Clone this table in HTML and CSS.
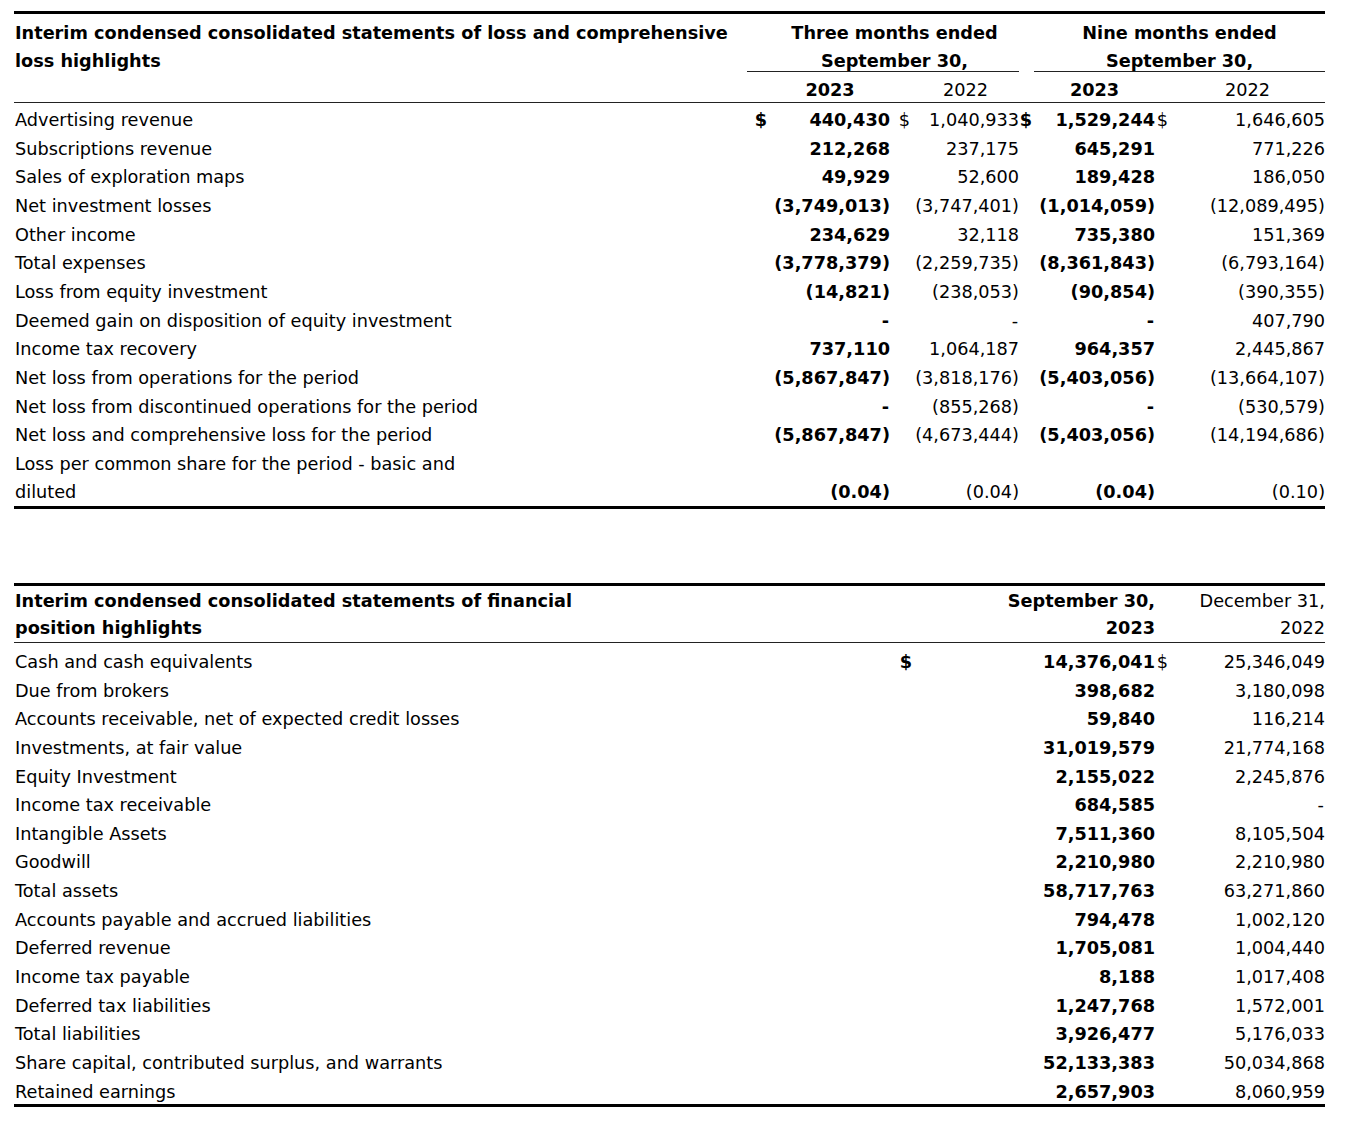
FILE: index.html
```html
<!DOCTYPE html>
<html>
<head>
<meta charset="utf-8">
<title>Highlights</title>
<link rel="stylesheet" href="styles.css">
</head>
<body>
<table class="fin loss">
  <colgroup>
    <col class="l-label"><col class="l-cur1"><col class="l-v1"><col class="l-cur2"><col class="l-v2"><col class="l-cur3"><col class="l-v3"><col class="l-cur4"><col class="l-v4">
  </colgroup>
  <thead>
    <tr class="h1">
      <th rowspan="3" class="title">Interim condensed consolidated statements of loss and comprehensive<br>loss highlights</th>
      <th colspan="4" class="period three">Three months ended</th>
      <th></th>
      <th colspan="3" class="period">Nine months ended</th>
    </tr>
    <tr class="h2">
      <th colspan="4" class="period three under">September 30,</th>
      <th></th>
      <th colspan="3" class="period under">September 30,</th>
    </tr>
    <tr class="h3">
      <th></th>
      <th class="year b">2023</th>
      <th></th>
      <th class="year">2022</th>
      <th></th>
      <th class="year b">2023</th>
      <th></th>
      <th class="year">2022</th>
    </tr>
  </thead>
  <tbody>
    <tr class="first"><td class="lbl">Advertising revenue</td><td class="cur b">$</td><td class="num b">440,430</td><td class="cur">$</td><td class="num">1,040,933</td><td class="cur b">$</td><td class="num b">1,529,244</td><td class="cur">$</td><td class="num">1,646,605</td></tr>
    <tr><td class="lbl">Subscriptions revenue</td><td></td><td class="num b">212,268</td><td></td><td class="num">237,175</td><td></td><td class="num b">645,291</td><td></td><td class="num">771,226</td></tr>
    <tr><td class="lbl">Sales of exploration maps</td><td></td><td class="num b">49,929</td><td></td><td class="num">52,600</td><td></td><td class="num b">189,428</td><td></td><td class="num">186,050</td></tr>
    <tr><td class="lbl">Net investment losses</td><td></td><td class="num b">(3,749,013)</td><td></td><td class="num">(3,747,401)</td><td></td><td class="num b">(1,014,059)</td><td></td><td class="num">(12,089,495)</td></tr>
    <tr><td class="lbl">Other income</td><td></td><td class="num b">234,629</td><td></td><td class="num">32,118</td><td></td><td class="num b">735,380</td><td></td><td class="num">151,369</td></tr>
    <tr><td class="lbl">Total expenses</td><td></td><td class="num b">(3,778,379)</td><td></td><td class="num">(2,259,735)</td><td></td><td class="num b">(8,361,843)</td><td></td><td class="num">(6,793,164)</td></tr>
    <tr><td class="lbl">Loss from equity investment</td><td></td><td class="num b">(14,821)</td><td></td><td class="num">(238,053)</td><td></td><td class="num b">(90,854)</td><td></td><td class="num">(390,355)</td></tr>
    <tr><td class="lbl">Deemed gain on disposition of equity investment</td><td></td><td class="num b dash">-</td><td></td><td class="num dash">-</td><td></td><td class="num b dash">-</td><td></td><td class="num">407,790</td></tr>
    <tr><td class="lbl">Income tax recovery</td><td></td><td class="num b">737,110</td><td></td><td class="num">1,064,187</td><td></td><td class="num b">964,357</td><td></td><td class="num">2,445,867</td></tr>
    <tr><td class="lbl">Net loss from operations for the period</td><td></td><td class="num b">(5,867,847)</td><td></td><td class="num">(3,818,176)</td><td></td><td class="num b">(5,403,056)</td><td></td><td class="num">(13,664,107)</td></tr>
    <tr><td class="lbl">Net loss from discontinued operations for the period</td><td></td><td class="num b dash">-</td><td></td><td class="num">(855,268)</td><td></td><td class="num b dash">-</td><td></td><td class="num">(530,579)</td></tr>
    <tr><td class="lbl">Net loss and comprehensive loss for the period</td><td></td><td class="num b">(5,867,847)</td><td></td><td class="num">(4,673,444)</td><td></td><td class="num b">(5,403,056)</td><td></td><td class="num">(14,194,686)</td></tr>
    <tr class="bot"><td class="lbl">Loss per common share for the period - basic and<br>diluted</td><td></td><td class="num b">(0.04)</td><td></td><td class="num">(0.04)</td><td></td><td class="num b">(0.04)</td><td></td><td class="num">(0.10)</td></tr>
  </tbody>
</table>

<table class="fin pos">
  <colgroup>
    <col class="p-label"><col class="p-cur1"><col class="p-v1"><col class="p-cur2"><col class="p-v2">
  </colgroup>
  <thead>
    <tr class="ph">
      <th class="title">Interim condensed consolidated statements of financial<br>position highlights</th>
      <th></th>
      <th class="num b">September 30,<br>2023</th>
      <th></th>
      <th class="num">December 31,<br>2022</th>
    </tr>
  </thead>
  <tbody>
    <tr class="first"><td class="lbl">Cash and cash equivalents</td><td class="cur b">$</td><td class="num b">14,376,041</td><td class="cur">$</td><td class="num">25,346,049</td></tr>
    <tr><td class="lbl">Due from brokers</td><td></td><td class="num b">398,682</td><td></td><td class="num">3,180,098</td></tr>
    <tr><td class="lbl">Accounts receivable, net of expected credit losses</td><td></td><td class="num b">59,840</td><td></td><td class="num">116,214</td></tr>
    <tr><td class="lbl">Investments, at fair value</td><td></td><td class="num b">31,019,579</td><td></td><td class="num">21,774,168</td></tr>
    <tr><td class="lbl">Equity Investment</td><td></td><td class="num b">2,155,022</td><td></td><td class="num">2,245,876</td></tr>
    <tr><td class="lbl">Income tax receivable</td><td></td><td class="num b">684,585</td><td></td><td class="num dash">-</td></tr>
    <tr><td class="lbl">Intangible Assets</td><td></td><td class="num b">7,511,360</td><td></td><td class="num">8,105,504</td></tr>
    <tr><td class="lbl">Goodwill</td><td></td><td class="num b">2,210,980</td><td></td><td class="num">2,210,980</td></tr>
    <tr><td class="lbl">Total assets</td><td></td><td class="num b">58,717,763</td><td></td><td class="num">63,271,860</td></tr>
    <tr><td class="lbl">Accounts payable and accrued liabilities</td><td></td><td class="num b">794,478</td><td></td><td class="num">1,002,120</td></tr>
    <tr><td class="lbl">Deferred revenue</td><td></td><td class="num b">1,705,081</td><td></td><td class="num">1,004,440</td></tr>
    <tr><td class="lbl">Income tax payable</td><td></td><td class="num b">8,188</td><td></td><td class="num">1,017,408</td></tr>
    <tr><td class="lbl">Deferred tax liabilities</td><td></td><td class="num b">1,247,768</td><td></td><td class="num">1,572,001</td></tr>
    <tr><td class="lbl">Total liabilities</td><td></td><td class="num b">3,926,477</td><td></td><td class="num">5,176,033</td></tr>
    <tr><td class="lbl">Share capital, contributed surplus, and warrants</td><td></td><td class="num b">52,133,383</td><td></td><td class="num">50,034,868</td></tr>
    <tr class="bot"><td class="lbl">Retained earnings</td><td></td><td class="num b">2,657,903</td><td></td><td class="num">8,060,959</td></tr>
  </tbody>
</table>
</body>
</html>
```

FILE: styles.css
```css
html, body {
  margin: 0;
  padding: 0;
  background: #fff;
}

body {
  font-family: "DejaVu Sans", Verdana, sans-serif;
  font-size: 17.7px;
  color: #000;
  padding: 11px 0 0 14px;
}

.fin {
  border-collapse: collapse;
  table-layout: fixed;
  width: 1311px;
  border-top: 3px solid #000;
  border-bottom: 3px solid #000;
}

.fin th,
.fin td {
  padding: 0;
  font-weight: normal;
  line-height: 28.65px;
  white-space: nowrap;
  vertical-align: top;
}

.fin tbody td { vertical-align: bottom; }

.fin .b { font-weight: bold; }

.fin .title {
  font-weight: bold;
  text-align: left;
  padding-left: 1px;
  vertical-align: top;
}

.fin .lbl { padding-left: 1px; text-align: left; }
.fin .num { text-align: right; }
.fin .cur { text-align: right; padding-right: 2px; }
.fin .dash { padding-right: 1px; }

/* loss table columns */
.l-label { width: 733px; }
.l-cur1 { width: 23px; }
.l-v1 { width: 120px; }
.l-cur2 { width: 22px; }
.l-v2 { width: 107px; }
.l-cur3 { width: 15px; }
.l-v3 { width: 121px; }
.l-cur4 { width: 15px; }
.l-v4 { width: 155px; }

.loss .title {
  line-height: 28px;
  padding-top: 5px;
  border-bottom: 1px solid #222;
}

.loss .period {
  font-weight: bold;
  text-align: center;
}

.loss .three { padding-left: 23px; }

.loss .h1 th {
  line-height: 28px;
  padding-top: 5px;
}

.loss .h2 th {
  line-height: 20px;
  padding-top: 4px;
}

.loss .h2 .under { border-bottom: 1px solid #222; }

.loss .h3 th {
  line-height: 24px;
  padding-top: 6px;
  border-bottom: 1px solid #222;
}

.loss .year { text-align: center; }
.loss .year.b { font-weight: bold; }

.loss tbody tr.first td { padding-top: 3px; }
.loss tbody tr.first td:nth-child(2) { padding-right: 3px; }

.loss tbody tr.bot td {
  line-height: 28px;
  padding-top: 0;
}

/* position table */
.pos { margin-top: 74px; }

.p-label { width: 876px; }
.p-cur1 { width: 25px; }
.p-v1 { width: 240px; }
.p-cur2 { width: 15px; }
.p-v2 { width: 155px; }

.pos .ph th {
  line-height: 27px;
  padding-top: 2px;
  border-bottom: 1px solid #222;
  vertical-align: top;
}

.pos .ph th.b { font-weight: bold; }

.pos tbody tr.first td { padding-top: 5px; }
.pos tbody tr.first td:nth-child(2) { padding-right: 3px; }

.pos tbody tr.bot td {
  line-height: 24px;
  padding-top: 2px;
}
```
